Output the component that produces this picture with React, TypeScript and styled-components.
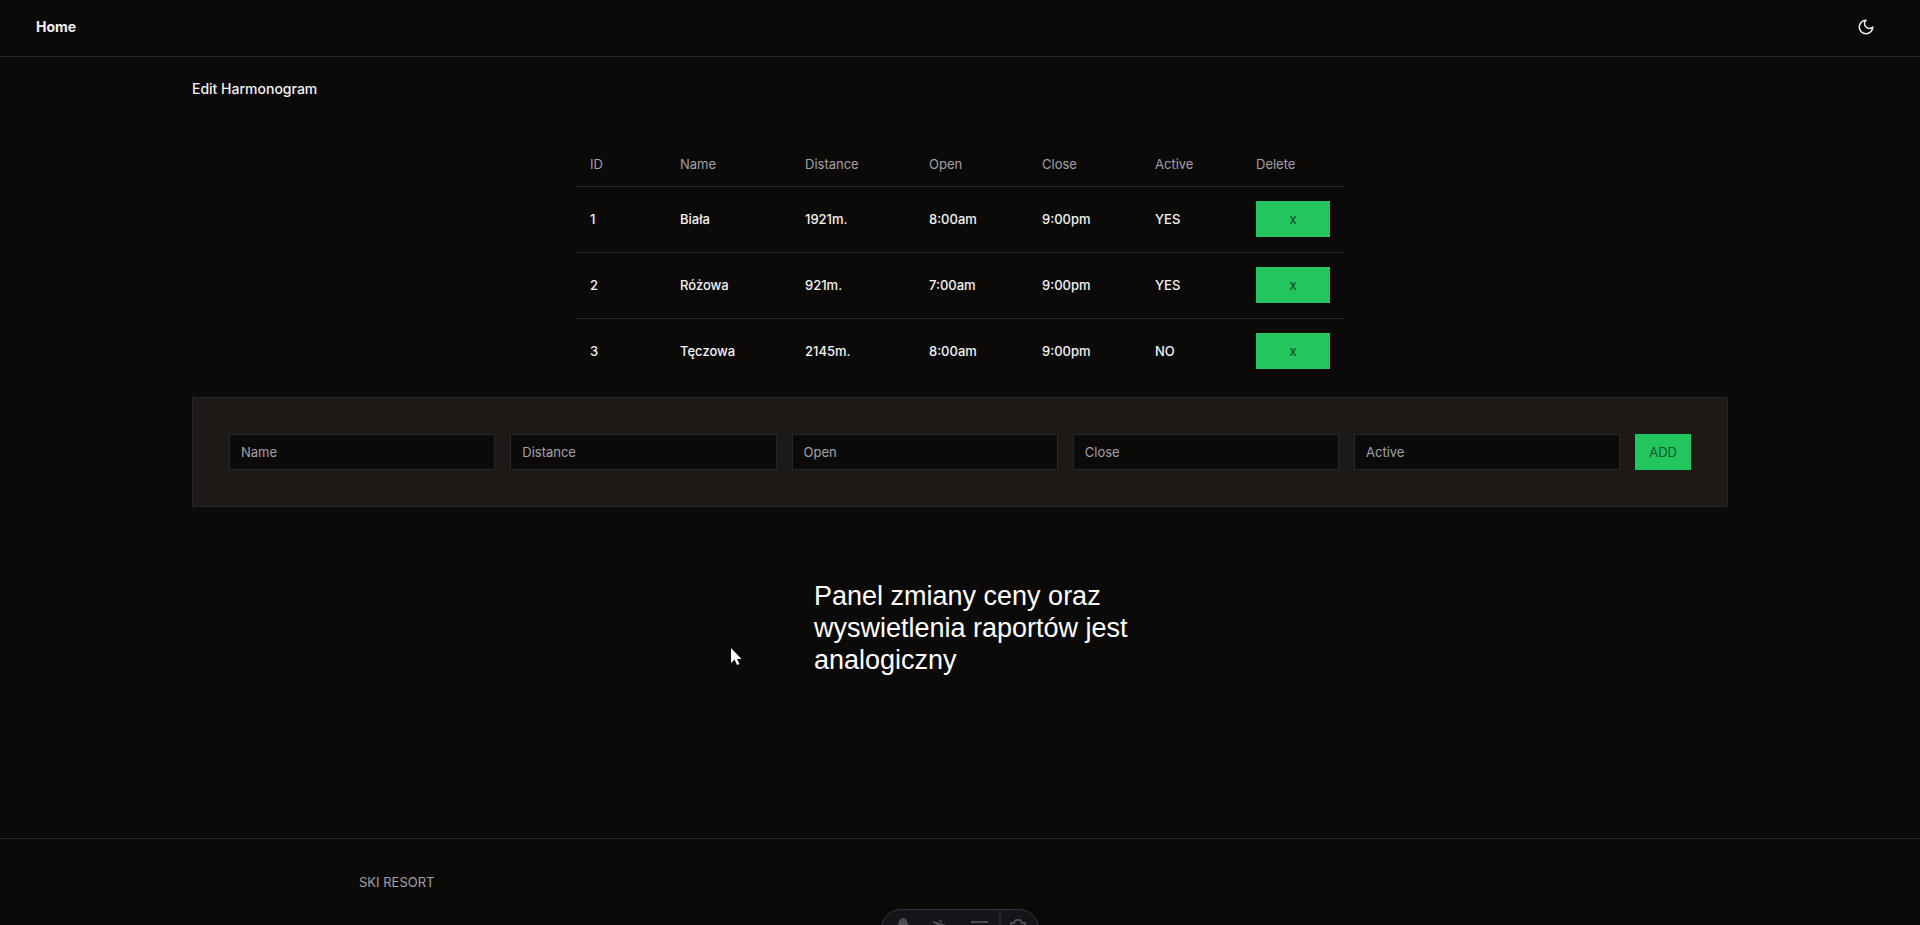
import React from "react";
import styled, { createGlobalStyle } from "styled-components";

const GlobalStyle = createGlobalStyle`
  *, *::before, *::after { box-sizing: border-box; }
  body {
    margin: 0;
    background: #0c0a09;
    color: #f2f2f2;
    font-family: Inter, "Liberation Sans", sans-serif;
    font-size: 13px;
    line-height: 18px;
  }
  button, input { font: inherit; }
`;

const Page = styled.div`
  min-height: 100vh;
  display: flex;
  flex-direction: column;
`;

const Header = styled.header`
  display: flex;
  align-items: center;
  justify-content: space-between;
  height: 57px;
  padding: 0 36px 2px;
  border-bottom: 1px solid #27272a;
`;

const HomeLink = styled.a`
  color: inherit;
  font-size: 14px;
  font-weight: 700;
  text-decoration: none;
`;

const ThemeButton = styled.button`
  display: grid;
  place-items: center;
  width: 36px;
  height: 36px;
  padding: 0;
  border: 0;
  background: none;
  color: inherit;
`;

const Main = styled.main`
  flex: 1;
  width: 80%;
  margin: 0 auto;
  padding-top: 22px;
`;

const Title = styled.h1`
  margin: 0 0 42px;
  font-size: 14px;
  font-weight: 500;
  line-height: 20px;
`;

const Table = styled.table`
  width: 50%;
  margin: 0 auto 13px;
  border-collapse: separate;
  border-spacing: 0;
  table-layout: fixed;
`;

const HeadCell = styled.th`
  height: 46px;
  padding: 0 14px;
  border-bottom: 1px solid #27272a;
  color: #a1a1aa;
  font-weight: 400;
  text-align: left;
`;

const Cell = styled.td`
  padding: 14px 14px 15px;
  font-weight: 500;
  tr:not(:last-child) > & { border-bottom: 1px solid #27272a; }
`;

const GreenButton = styled.button<{ $wide?: boolean }>`
  display: block;
  width: ${(p) => (p.$wide ? "100%" : "auto")};
  height: 36px;
  padding: 0 14px;
  border: 0;
  background: #22c55e;
  color: #14532d;
`;

const AddForm = styled.form`
  display: flex;
  gap: 15px;
  padding: 36px;
  border: 1px solid #27272a;
  background: #1c1917;
`;

const Field = styled.input`
  flex: 1;
  min-width: 0;
  height: 36px;
  padding: 0 11px;
  border: 1px solid #27272a;
  border-radius: 0;
  background: #0c0a09;
  color: inherit;
  &::placeholder { color: #a1a1aa; opacity: 1; }
`;

const NoteArea = styled.section`
  position: relative;
  padding: 73px 0 48px 622px;
`;

const Note = styled.p`
  width: 330px;
  margin: 0;
  color: #fff;
  font-family: "Liberation Sans", Arial, sans-serif;
  font-size: 27px;
  line-height: 32px;
`;

const Pointer = styled.svg`
  position: absolute;
  left: 538px;
  top: 140px;
`;

const Footer = styled.footer`
  height: 87px;
  padding: 34px 359px 0;
  border-top: 1px solid #27272a;
  color: #a1a1aa;
`;

const DevBar = styled.div`
  position: fixed;
  left: 50%;
  bottom: -24px;
  display: flex;
  width: 158px;
  height: 40px;
  overflow: hidden;
  transform: translateX(-50%);
  border: 1px solid #343841;
  border-radius: 20px;
  background: #13151a;
  color: #4b4d52;
`;

const columns = [
  { label: "ID", width: 90 },
  { label: "Name", width: 125 },
  { label: "Distance", width: 124 },
  { label: "Open", width: 113 },
  { label: "Close", width: 113 },
  { label: "Active", width: 101 },
  { label: "Delete", width: 102 },
];

const slopes = [
  ["1", "Biała", "1921m.", "8:00am", "9:00pm", "YES"],
  ["2", "Różowa", "921m.", "7:00am", "9:00pm", "YES"],
  ["3", "Tęczowa", "2145m.", "8:00am", "9:00pm", "NO"],
];

const fields = ["Name", "Distance", "Open", "Close", "Active"];

export default function App() {
  return (
    <>
      <GlobalStyle />
      <Page>
        <Header>
          <HomeLink href="#">Home</HomeLink>
          <ThemeButton type="button" aria-label="Toggle theme">
            <svg
              width="18"
              height="18"
              viewBox="0 0 24 24"
              fill="none"
              stroke="currentColor"
              strokeWidth="2"
              strokeLinecap="round"
              strokeLinejoin="round"
            >
              <path d="M12 3a6 6 0 0 0 9 9 9 9 0 1 1-9-9Z" />
            </svg>
          </ThemeButton>
        </Header>
        <Main>
          <Title>Edit Harmonogram</Title>
          <Table>
            <colgroup>
              {columns.map((c) => (
                <col key={c.label} width={c.width} />
              ))}
            </colgroup>
            <thead>
              <tr>
                {columns.map((c) => (
                  <HeadCell key={c.label} scope="col">{c.label}</HeadCell>
                ))}
              </tr>
            </thead>
            <tbody>
              {slopes.map((row) => (
                <tr key={row[0]}>
                  {row.map((value, i) => (
                    <Cell key={i}>{value}</Cell>
                  ))}
                  <Cell>
                    <GreenButton type="button" $wide aria-label={`Delete ${row[1]}`}>x</GreenButton>
                  </Cell>
                </tr>
              ))}
            </tbody>
          </Table>
          <AddForm onSubmit={(e) => e.preventDefault()}>
            {fields.map((f) => (
              <Field key={f} type="text" placeholder={f} aria-label={f} />
            ))}
            <GreenButton type="submit">ADD</GreenButton>
          </AddForm>
          <NoteArea>
            <Note>Panel zmiany ceny oraz wyswietlenia raportów jest analogiczny</Note>
            <Pointer width="12" height="19" viewBox="0 0 12 19" aria-hidden="true">
              <path d="M1 1V16L4.500 12.500L7 18L9.500 17L7 12H11.500Z" fill="#fff" />
            </Pointer>
          </NoteArea>
        </Main>
        <Footer>SKI RESORT</Footer>
      </Page>
      <DevBar aria-hidden="true">
        <svg width="156" height="38" viewBox="0 0 156 38" fill="none" stroke="currentColor" strokeWidth="2">
          <path d="M16 17L18 11Q21 7 24 11L26 17Z" fill="currentColor" />
          <path d="M51 12L64 16M55 12L56 17M57 10L60 12" />
          <path d="M89 12H106" />
          <path d="M118 0V38" stroke="#343841" strokeWidth="1" />
          <path d="M129 17V13H132L134 10H138L140 13H143V17" />
        </svg>
      </DevBar>
    </>
  );
}
